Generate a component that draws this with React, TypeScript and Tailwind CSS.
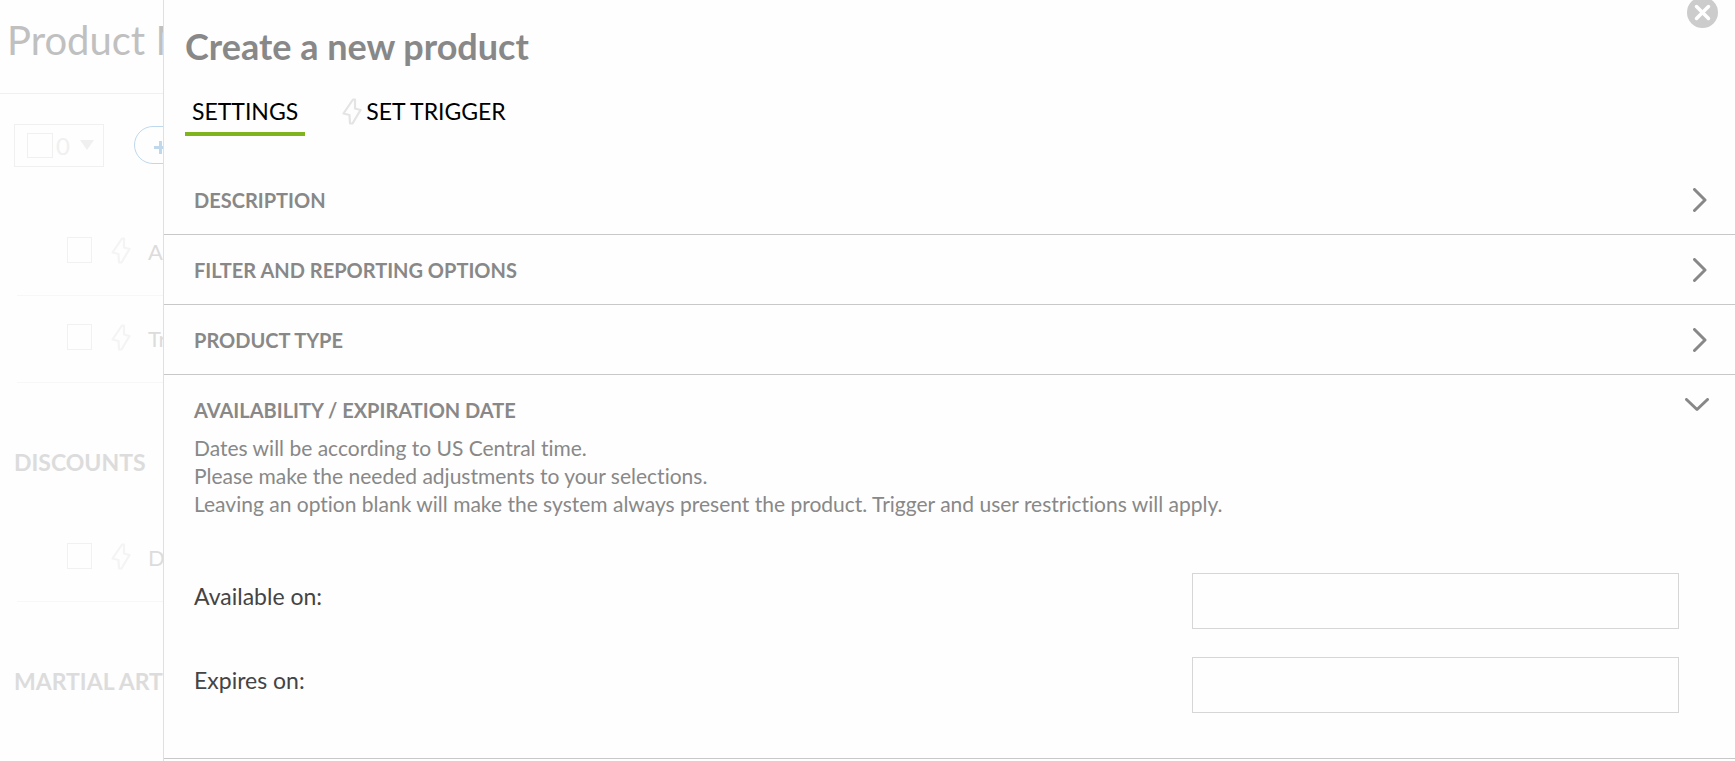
import React, { useState } from "react";

type Section = {
  id: string;
  title: string;
};

const sections: Section[] = [
  { id: "description", title: "DESCRIPTION" },
  { id: "filter", title: "FILTER AND REPORTING OPTIONS" },
  { id: "type", title: "PRODUCT TYPE" },
  { id: "availability", title: "AVAILABILITY / EXPIRATION DATE" },
];

function Bolt({ className }: { className: string }) {
  return (
    <svg viewBox="0 0 20 27" fill="none" stroke="currentColor" strokeWidth="2.2" strokeLinejoin="round" className={className}>
      <path d="M11 1.500 1.500 15.500l6 1.500L8 25.500h2.500L18.500 12l-5.500-1.500V1.500z" />
    </svg>
  );
}

function Chevron({ open }: { open: boolean }) {
  return open ? (
    <svg width="24" height="14" viewBox="0 0 24 14" fill="none" stroke="#888" strokeWidth="3" strokeLinecap="round" strokeLinejoin="round" className="mr-[2px] mb-[10px]">
      <path d="M1.500 1.500 12 11.500l10.500-10" />
    </svg>
  ) : (
    <svg width="14" height="24" viewBox="0 0 14 24" fill="none" stroke="#888" strokeWidth="3" strokeLinecap="round" strokeLinejoin="round" className="mr-1">
      <path d="m1.500 1.500 10.500 10.500-10.500 10.500" />
    </svg>
  );
}

function ProductRow({ name }: { name: string }) {
  return (
    <li className="ml-[17px] flex h-[87px] items-center border-b border-[#f7f7f7] pb-1 pl-[50px]">
      <input type="checkbox" aria-label={name} className="h-[26px] w-[25px] shrink-0 appearance-none border border-[#f1f1f1]" />
      <Bolt className="ml-[19px] h-[27px] w-5 shrink-0 text-[#f4f4f4]" />
      <span className="ml-[17px] pt-[2px] text-[22px] text-[#dcdcdc]">{name}</span>
    </li>
  );
}

function GroupTitle({ children }: { children: React.ReactNode }) {
  return <h2 className="flex h-[132px] items-end pb-[36px] pl-[14px] text-[23px] leading-[34px] font-bold text-[#dcdcdc]">{children}</h2>;
}

/* Faded product list that stays visible next to the panel */
function ProductList() {
  return (
    <aside className="w-[163px] shrink-0 overflow-hidden whitespace-nowrap">
      <h1 className="flex h-[94px] items-center border-b border-[#f0f0f0] pb-[14px] pl-[7px] text-[40px] text-[#c0c0c0]">
        Product M
      </h1>
      <div className="flex h-[115px] items-start pt-[30px] pl-[14px]">
        <div className="flex h-[43px] w-[90px] shrink-0 items-center border border-[#f0f0f0] pl-3 text-[#f0f0f0]">
          <input type="checkbox" aria-label="Select all" className="h-[25px] w-[26px] shrink-0 appearance-none border border-[#f0f0f0]" />
          <span className="ml-[3px] text-2xl">0</span>
          <svg width="14" height="10" viewBox="0 0 14 10" fill="currentColor" className="mb-[2px] ml-[10px]">
            <path d="M0 0h14L7 10z" />
          </svg>
        </div>
        <button
          aria-label="Add"
          className="mt-[2px] ml-[30px] flex h-[38px] w-[120px] shrink-0 items-center rounded-full border border-[#bfd8ec] pt-1 pl-[19px] text-[#bfd8ec]"
        >
          <svg width="13" height="13" viewBox="0 0 13 13" stroke="currentColor" strokeWidth="3">
            <path d="M6.500 0v13M0 6.500h13" />
          </svg>
        </button>
      </div>
      <ul>
        <ProductRow name="Ad" />
        <ProductRow name="Tri" />
      </ul>
      <GroupTitle>DISCOUNTS</GroupTitle>
      <ul>
        <ProductRow name="Di" />
      </ul>
      <GroupTitle>MARTIAL ART</GroupTitle>
    </aside>
  );
}

function DateField({ id, label }: { id: string; label: string }) {
  return (
    <div className="flex items-start justify-between">
      <label htmlFor={id} className="pt-[6px] text-[23px] leading-[34px] text-[#444]">
        {label}
      </label>
      <input id={id} type="text" className="h-[56px] w-[487px] border border-[#d6d6d6] px-3 text-[21px] outline-none" />
    </div>
  );
}

function Availability() {
  return (
    <div className="pb-[45px] pl-[30px]">
      <p className="-mt-[10px] text-[21px] leading-7 text-[#888] [font-variant-ligatures:none]">
        Dates will be according to US Central time.
        <br />
        Please make the needed adjustments to your selections.
        <br />
        Leaving an option blank will make the system always present the product. Trigger and user restrictions will apply.
      </p>
      <div className="mt-[55px] flex flex-col gap-7 pr-14">
        <DateField id="available-on" label="Available on:" />
        <DateField id="expires-on" label="Expires on:" />
      </div>
    </div>
  );
}

export default function App() {
  const [openId, setOpenId] = useState("availability");

  return (
    <div className="flex h-screen overflow-hidden bg-[#fefefe] font-['Lato',sans-serif]">
      <ProductList />
      <main className="relative min-w-0 flex-1 border-l border-[#e0e0e0]">
        <button aria-label="Close" className="absolute -top-[3px] right-[17px]">
          <svg width="31" height="31" viewBox="0 0 31 31" className="block">
            <circle cx="15.500" cy="15.500" r="15.500" fill="#ccc" />
            <path d="m9.500 9.500 12 12m0-12-12 12" stroke="#fff" strokeWidth="3.500" strokeLinecap="round" />
          </svg>
        </button>

        <h2 className="px-[21px] pt-[23px] text-4xl leading-[46px] font-bold text-[#888]">Create a new product</h2>

        <nav className="flex h-[67px] items-end gap-[37px] px-[21px] text-[23px] text-black">
          <button className="h-[50px] border-b-4 border-[#80b41f] px-[7px] pt-1">SETTINGS</button>
          <button className="flex h-[50px] items-center border-b-4 border-transparent pt-1">
            <Bolt className="h-[27px] w-5 text-[#e4e4e4]" />
            <span className="ml-1">SET TRIGGER</span>
          </button>
        </nav>

        <div className="mt-[29px]">
          {sections.map((section) => {
            const open = openId === section.id;
            return (
              <section key={section.id} className="border-b border-[#c8c8c8]">
                <h3>
                  <button
                    aria-expanded={open}
                    onClick={() => setOpenId(open ? "" : section.id)}
                    className="flex h-[69px] w-full items-center justify-between pr-6 pl-[30px] text-xl font-bold text-[#888]"
                  >
                    {section.title}
                    <Chevron open={open} />
                  </button>
                </h3>
                {open && section.id === "availability" && <Availability />}
              </section>
            );
          })}
        </div>
      </main>
    </div>
  );
}
